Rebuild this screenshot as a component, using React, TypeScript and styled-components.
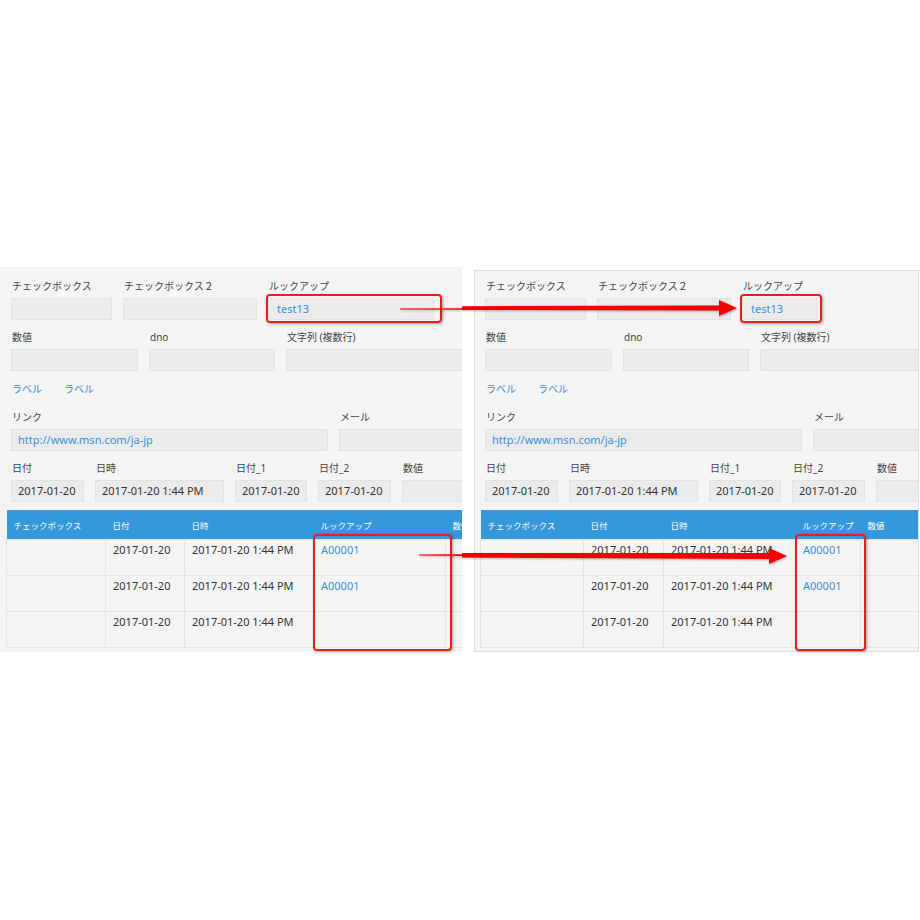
import React from "react";
import styled, { createGlobalStyle } from "styled-components";

const GlobalStyle = createGlobalStyle`
  html, body {
    margin: 0;
    padding: 0;
    background: #fff;
  }
  body {
    font-family: "Noto Sans", "Noto Sans CJK JP", sans-serif;
  }
`;

const Stage = styled.div`
  position: relative;
  width: 920px;
  height: 920px;
  box-sizing: border-box;
  padding-top: 267px;
  display: flex;
  align-items: flex-start;
  gap: 12px;
  overflow: hidden;
  background: #fff;
`;

const Screen = styled.div<{ $framed?: boolean }>`
  flex-shrink: 0;
  box-sizing: border-box;
  width: ${(p) => (p.$framed ? 445 : 462)}px;
  height: ${(p) => (p.$framed ? 382 : 385)}px;
  margin-top: ${(p) => (p.$framed ? 3 : 0)}px;
  padding: ${(p) => (p.$framed ? "8px 0 0 5px" : "12px 0 0 6px")};
  background: #f4f4f4;
  border: ${(p) => (p.$framed ? "1px solid #dcdcdc" : "none")};
  overflow: hidden;
`;

const Form = styled.div`
  width: 640px;
  padding-left: 5px;
  display: flex;
  flex-direction: column;
`;

const FieldRow = styled.div<{ $top: number; $gap?: number }>`
  display: flex;
  gap: ${(p) => p.$gap ?? 11}px;
  margin-top: ${(p) => p.$top}px;
`;

const Field = styled.div<{ $w: number }>`
  flex-shrink: 0;
  width: ${(p) => p.$w}px;
  display: flex;
  flex-direction: column;
  gap: 4px;
`;

const Label = styled.div`
  height: 15px;
  line-height: 15px;
  padding-left: 1px;
  font-size: 10px;
  color: #444;
  white-space: nowrap;
`;

const Input = styled.div<{ $pad?: number }>`
  box-sizing: border-box;
  height: 22px;
  line-height: 20px;
  padding-left: ${(p) => p.$pad ?? 6}px;
  background: #ebebeb;
  border: 1px solid #e2e2e2;
  font-size: 11px;
  color: #333;
  white-space: nowrap;
  overflow: hidden;
`;

const LinkText = styled.span`
  color: #3a8fd9;
`;

const TextLink = styled.span`
  height: 15px;
  line-height: 15px;
  padding-left: 1px;
  font-size: 10px;
  color: #3a8fd9;
`;

const Grid = styled.table<{ $w: number }>`
  margin-top: 8px;
  width: ${(p) => p.$w}px;
  border-collapse: collapse;
  table-layout: fixed;
`;

const HeadCell = styled.th`
  height: 29px;
  padding: 0 7px;
  background: #3498db;
  color: #fff;
  font-size: 8.5px;
  font-weight: normal;
  text-align: left;
  white-space: nowrap;
  overflow: hidden;
`;

const BodyRow = styled.tr`
  height: 36px;
`;

const Cell = styled.td`
  padding: 2px 6px 0 7px;
  border: 1px solid #e4e4e4;
  vertical-align: top;
  font-size: 11px;
  line-height: 16px;
  color: #333;
  white-space: nowrap;
  overflow: hidden;
`;

const RedFrame = styled.div<{ $x: number; $y: number; $w: number; $h: number }>`
  position: absolute;
  left: ${(p) => p.$x}px;
  top: ${(p) => p.$y}px;
  width: ${(p) => p.$w}px;
  height: ${(p) => p.$h}px;
  box-sizing: border-box;
  border: 2px solid #ec1c1c;
  border-radius: 4px;
  box-shadow: 1px 1px 3px rgba(0, 0, 0, 0.35);
  pointer-events: none;
`;

const ArrowLayer = styled.svg`
  position: absolute;
  left: 0;
  top: 0;
  width: 920px;
  height: 920px;
  pointer-events: none;
  filter: drop-shadow(1px 1px 1px rgba(0, 0, 0, 0.3));
`;

const headers = ["チェックボックス", "日付", "日時", "ルックアップ", "数値"];
const rows = [
  ["", "2017-01-20", "2017-01-20 1:44 PM", "A00001", ""],
  ["", "2017-01-20", "2017-01-20 1:44 PM", "A00001", ""],
  ["", "2017-01-20", "2017-01-20 1:44 PM", "", ""],
];

type FormScreenProps = {
  framed?: boolean;
  lookupWidth: number;
  columns: number[];
};

function FormScreen({ framed, lookupWidth, columns }: FormScreenProps) {
  const tableWidth = columns.reduce((a, b) => a + b, 0);
  return (
    <Screen $framed={framed}>
      <Form>
        <FieldRow $top={0}>
          <Field $w={101}>
            <Label>チェックボックス</Label>
            <Input />
          </Field>
          <Field $w={134}>
            <Label>チェックボックス２</Label>
            <Input />
          </Field>
          <Field $w={lookupWidth}>
            <Label>ルックアップ</Label>
            <Input $pad={8}>
              <LinkText>test13</LinkText>
            </Input>
          </Field>
        </FieldRow>

        <FieldRow $top={10}>
          <Field $w={127}>
            <Label>数値</Label>
            <Input />
          </Field>
          <Field $w={126}>
            <Label>dno</Label>
            <Input />
          </Field>
          <Field $w={300}>
            <Label>文字列 (複数行)</Label>
            <Input />
          </Field>
        </FieldRow>

        <FieldRow $top={11} $gap={21}>
          <TextLink>ラベル</TextLink>
          <TextLink>ラベル</TextLink>
        </FieldRow>

        <FieldRow $top={13}>
          <Field $w={317}>
            <Label>リンク</Label>
            <Input>
              <LinkText>http://www.msn.com/ja-jp</LinkText>
            </Input>
          </Field>
          <Field $w={200}>
            <Label>メール</Label>
            <Input />
          </Field>
        </FieldRow>

        <FieldRow $top={10}>
          <Field $w={73}>
            <Label>日付</Label>
            <Input>2017-01-20</Input>
          </Field>
          <Field $w={129}>
            <Label>日時</Label>
            <Input>2017-01-20 1:44 PM</Input>
          </Field>
          <Field $w={72}>
            <Label>日付_1</Label>
            <Input>2017-01-20</Input>
          </Field>
          <Field $w={73}>
            <Label>日付_2</Label>
            <Input>2017-01-20</Input>
          </Field>
          <Field $w={80}>
            <Label>数値</Label>
            <Input />
          </Field>
        </FieldRow>
      </Form>

      <Grid $w={tableWidth}>
        <colgroup>
          {columns.map((w, i) => (
            <col key={i} style={{ width: w }} />
          ))}
        </colgroup>
        <thead>
          <tr>
            {headers.map((h) => (
              <HeadCell key={h}>{h}</HeadCell>
            ))}
          </tr>
        </thead>
        <tbody>
          {rows.map((r, i) => (
            <BodyRow key={i}>
              {r.map((c, j) => (
                <Cell key={j}>{j === 3 ? <LinkText>{c}</LinkText> : c}</Cell>
              ))}
            </BodyRow>
          ))}
        </tbody>
      </Grid>
    </Screen>
  );
}

export default function App() {
  return (
    <>
      <GlobalStyle />
      <Stage>
        <FormScreen lookupWidth={166} columns={[99, 79, 129, 132, 80]} />
        <FormScreen framed lookupWidth={76} columns={[103, 80, 132, 65, 80]} />

        <RedFrame $x={266} $y={294} $w={176} $h={29} />
        <RedFrame $x={740} $y={294} $w={82} $h={29} />
        <RedFrame $x={313} $y={534} $w={139} $h={117} />
        <RedFrame $x={795} $y={534} $w={71} $h={117} />

        <ArrowLayer viewBox="0 0 920 920">
          <g fill="#f50000">
            <polygon points="400,308.4 463,308.2 463,309.8 400,309.6" />
            <polygon points="462,306.2 722,305.6 722,310.6 462,310" />
            <polygon points="719,300 737,308 719,316" />
            <polygon points="419,554.4 463,554.3 463,555.9 419,555.6" />
            <polygon points="462,553 772,553 772,559 462,557.6" />
            <polygon points="769,548 787,556 769,564" />
          </g>
        </ArrowLayer>
      </Stage>
    </>
  );
}
